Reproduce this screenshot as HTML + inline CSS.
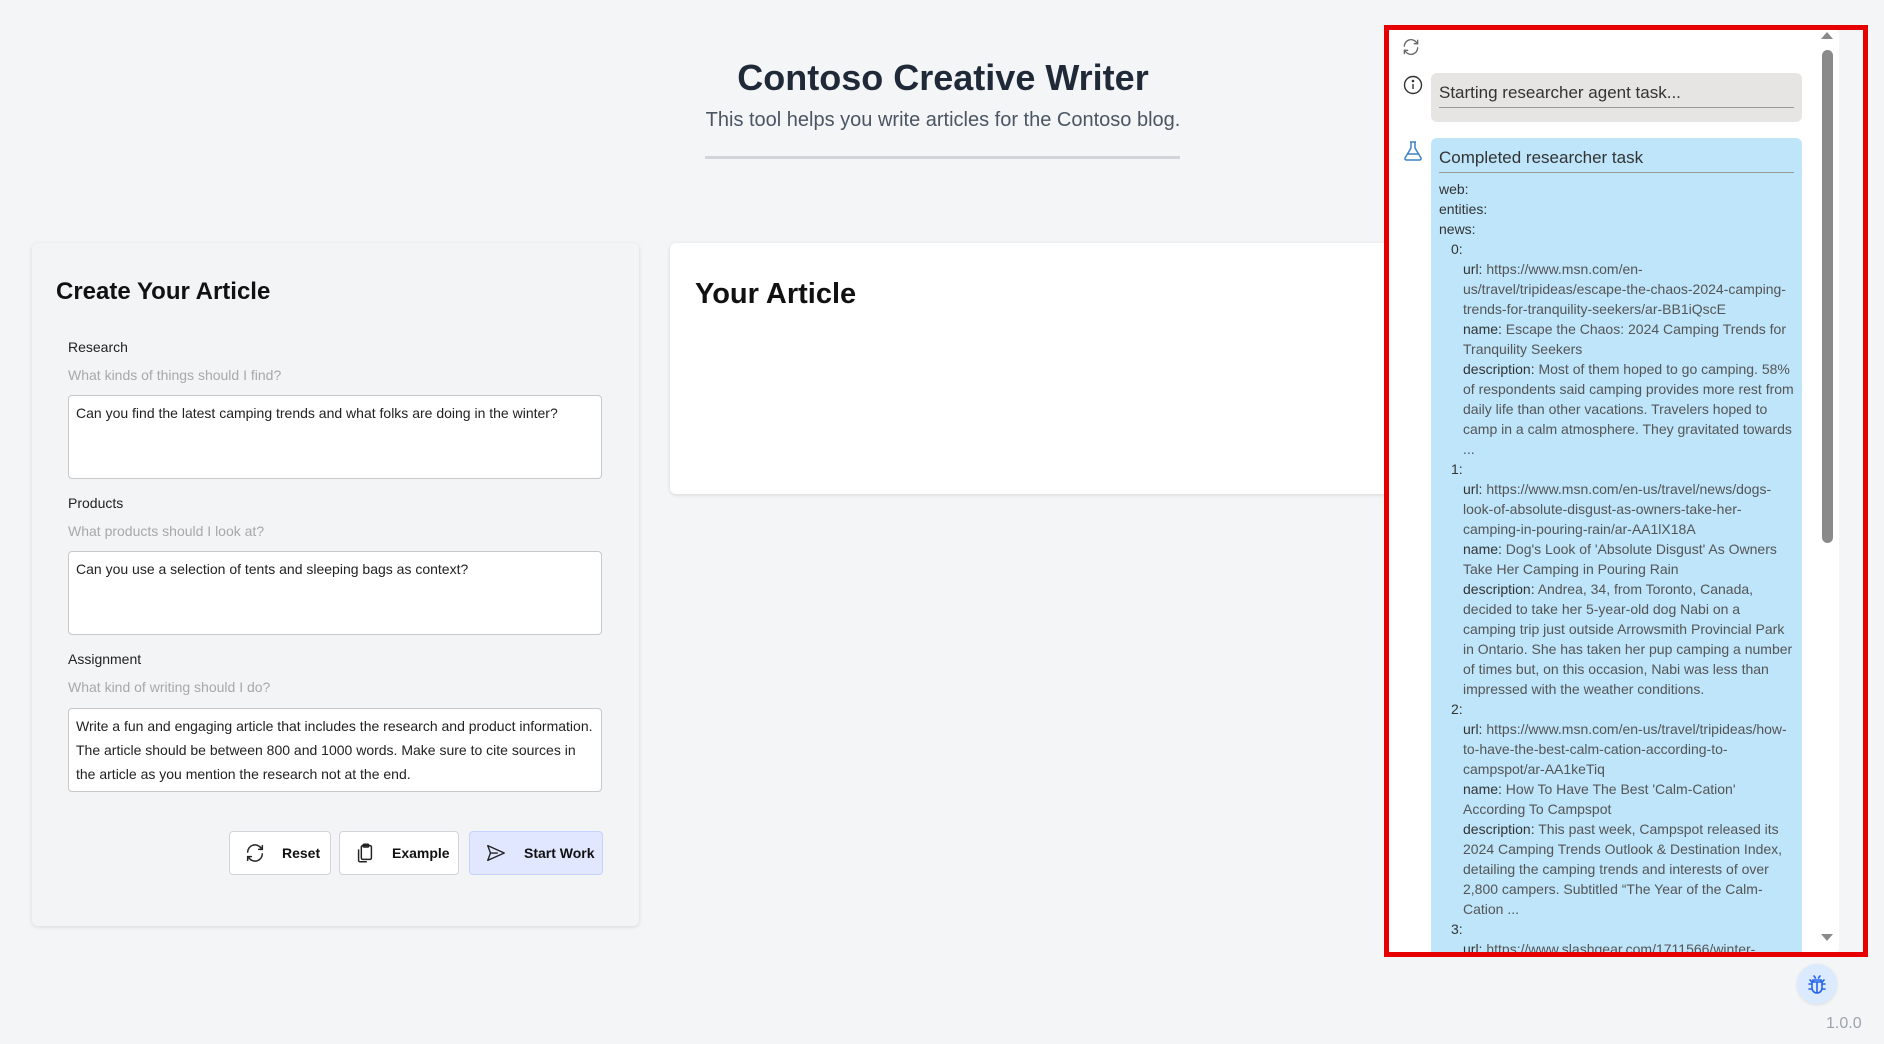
<!DOCTYPE html>
<html><head><meta charset="utf-8"><style>
*{box-sizing:border-box;margin:0;padding:0}
body{width:1884px;height:1044px;background:#f4f5f7;font-family:"Liberation Sans",sans-serif;position:relative;overflow:hidden;color:#1f2937}
.abs{position:absolute}
h1{position:absolute;left:0;width:1886px;text-align:center;top:57px;font-size:36px;font-weight:bold;color:#1f2937}
.sub{position:absolute;left:0;width:1886px;text-align:center;top:109px;font-size:20px;color:#4b5563}
.hr{position:absolute;left:705px;top:156px;width:475px;height:3px;background:#d1d5db}
.card{position:absolute;background:#fff;border-radius:6px;box-shadow:0 1px 4px rgba(0,0,0,.12)}
.lbl{position:absolute;left:68px;font-size:14px;color:#222}
.hint{position:absolute;left:68px;font-size:14px;color:#a8a8a8}
.ta{position:absolute;left:68px;width:534px;background:#fff;border:1px solid #c8c8c8;border-radius:4px;padding:5px 7px;font-size:14px;line-height:24px;color:#222}
.btn{position:absolute;top:831px;height:44px;border:1px solid #d4d4d8;border-radius:4px;background:#fff;font-size:14px;font-weight:bold;color:#111;display:flex;align-items:center}
.btn svg{margin-left:14px;margin-right:16px}
.bub{position:absolute;left:42px;width:371px;border-radius:6px}
.bl{font-size:14px;line-height:20px;color:#555;white-space:nowrap}
.k{color:#333}
</style></head><body>
<h1>Contoso Creative Writer</h1>
<div class="sub">This tool helps you write articles for the Contoso blog.</div>
<div class="hr"></div>

<div class="card" style="left:32px;top:243px;width:607px;height:683px;background:#f3f4f6"></div>
<div class="abs" style="left:56px;top:278px;font-size:24px;font-weight:bold;color:#111">Create Your Article</div>
<div class="lbl" style="top:339px">Research</div>
<div class="hint" style="top:367px">What kinds of things should I find?</div>
<div class="ta" style="top:395px;height:84px">Can you find the latest camping trends and what folks are doing in the winter?</div>
<div class="lbl" style="top:495px">Products</div>
<div class="hint" style="top:523px">What products should I look at?</div>
<div class="ta" style="top:551px;height:84px">Can you use a selection of tents and sleeping bags as context?</div>
<div class="lbl" style="top:651px">Assignment</div>
<div class="hint" style="top:679px">What kind of writing should I do?</div>
<div class="ta" style="top:708px;height:84px">Write a fun and engaging article that includes the research and product information. The article should be between 800 and 1000 words. Make sure to cite sources in the article as you mention the research not at the end.</div>

<div class="btn" style="left:229px;width:102px"><svg width="22" height="22" viewBox="0 0 24 24" fill="none" stroke="#222" stroke-width="1.6" stroke-linecap="round"><path d="M4 11a8 8 0 0 1 14.5-4.5M20 4v4h-4M20 13a8 8 0 0 1-14.5 4.5M4 20v-4h4"/></svg>Reset</div>
<div class="btn" style="left:339px;width:120px"><svg width="22" height="22" viewBox="0 0 24 24" fill="none" stroke="#222" stroke-width="1.6"><rect x="8" y="4" width="11" height="15" rx="1.5"/><path d="M5 8v12a1.5 1.5 0 0 0 1.5 1.5H14" /><rect x="10" y="2.5" width="6" height="3" rx="1"/></svg>Example</div>
<div class="btn" style="left:469px;width:134px;background:#e0e7ff;border-color:#c7d2fe"><svg width="24" height="22" viewBox="0 0 24 24" fill="none" stroke="#222" stroke-width="1.5" stroke-linejoin="round"><path d="M3 4l18 8-18 8 3-8zM6 12h8"/></svg>Start Work</div>

<div class="card" style="left:670px;top:243px;width:730px;height:251px"></div>
<div class="abs" style="left:695px;top:278px;font-size:29px;font-weight:bold;color:#111">Your Article</div>

<div class="abs" style="left:1389px;top:30px;width:450px;height:922px;background:#fff;overflow:hidden;border-radius:4px">
 <svg class="abs" style="left:12px;top:7px" width="20" height="20" viewBox="0 0 24 24" fill="none" stroke="#666" stroke-width="1.6" stroke-linecap="round"><path d="M4 11a8 8 0 0 1 14.5-4.5M20 4v4h-4M20 13a8 8 0 0 1-14.5 4.5M4 20v-4h4"/></svg>
 <svg class="abs" style="left:14px;top:45px" width="20" height="20" viewBox="0 0 20 20" fill="none" stroke="#333" stroke-width="1.4"><circle cx="10" cy="10" r="8.5"/><path d="M10 9v5"/><circle cx="10" cy="6" r=".6" fill="#333"/></svg>
 <svg class="abs" style="left:13px;top:110px" width="22" height="22" viewBox="0 0 22 22" fill="none" stroke="#3b82c4" stroke-width="1.5" stroke-linejoin="round"><path d="M8 2h6M9 2v6L3 18a1.5 1.5 0 0 0 1.3 2h13.4A1.5 1.5 0 0 0 19 18L13 8V2M5 14h12"/></svg>
 <div class="bub" style="top:43px;height:49px;background:#e6e5e4;padding:0 8px">
  <div style="font-size:17px;line-height:18px;padding-top:11px;padding-bottom:5px;color:#333;border-bottom:1px solid #9a9a9a">Starting researcher agent task...</div>
 </div>
 <div class="bub" style="top:108px;height:900px;background:#bee5fa;padding:0 8px">
  <div style="font-size:17px;line-height:18px;padding-top:11px;padding-bottom:5px;color:#333;border-bottom:1px solid #9a9a9a">Completed researcher task</div>
  <div class="bl" style="padding-top:6px">
  <div class="k">web:</div><div class="k">entities:</div><div class="k">news:</div>
  <div style="padding-left:12px"><div class="k">0:</div>
   <div style="padding-left:12px">
   <div><span class="k">url:</span> https://www.msn.com/en-</div><div>us/travel/tripideas/escape-the-chaos-2024-camping-</div><div>trends-for-tranquility-seekers/ar-BB1iQscE</div>
   <div><span class="k">name:</span> Escape the Chaos: 2024 Camping Trends for</div><div>Tranquility Seekers</div>
   <div><span class="k">description:</span> Most of them hoped to go camping. 58%</div><div>of respondents said camping provides more rest from</div><div>daily life than other vacations. Travelers hoped to</div><div>camp in a calm atmosphere. They gravitated towards</div><div>...</div></div>
   <div class="k">1:</div>
   <div style="padding-left:12px">
   <div><span class="k">url:</span> https://www.msn.com/en-us/travel/news/dogs-</div><div>look-of-absolute-disgust-as-owners-take-her-</div><div>camping-in-pouring-rain/ar-AA1lX18A</div>
   <div><span class="k">name:</span> Dog's Look of 'Absolute Disgust' As Owners</div><div>Take Her Camping in Pouring Rain</div>
   <div><span class="k">description:</span> Andrea, 34, from Toronto, Canada,</div><div>decided to take her 5-year-old dog Nabi on a</div><div>camping trip just outside Arrowsmith Provincial Park</div><div>in Ontario. She has taken her pup camping a number</div><div>of times but, on this occasion, Nabi was less than</div><div>impressed with the weather conditions.</div></div>
   <div class="k">2:</div>
   <div style="padding-left:12px">
   <div><span class="k">url:</span> https://www.msn.com/en-us/travel/tripideas/how-</div><div>to-have-the-best-calm-cation-according-to-</div><div>campspot/ar-AA1keTiq</div>
   <div><span class="k">name:</span> How To Have The Best 'Calm-Cation'</div><div>According To Campspot</div>
   <div><span class="k">description:</span> This past week, Campspot released its</div><div>2024 Camping Trends Outlook &amp; Destination Index,</div><div>detailing the camping trends and interests of over</div><div>2,800 campers. Subtitled “The Year of the Calm-</div><div>Cation ...</div></div>
   <div class="k">3:</div>
   <div style="padding-left:12px"><div><span class="k">url:</span> https://www.slashgear.com/1711566/winter-</div></div>
  </div></div>
 </div>
 <div class="abs" style="left:433px;top:20px;width:11px;height:493px;background:#8a8a8a;border-radius:6px"></div>
 <div class="abs" style="left:432px;top:2px;width:0;height:0;border-left:6px solid transparent;border-right:6px solid transparent;border-bottom:7px solid #8a8a8a"></div>
 <div class="abs" style="left:432px;top:904px;width:0;height:0;border-left:6px solid transparent;border-right:6px solid transparent;border-top:7px solid #8a8a8a"></div>
</div>
<div class="abs" style="left:1384px;top:25px;width:484px;height:932px;border:5px solid #e60000"></div>

<div class="abs" style="left:1797px;top:964px;width:40px;height:40px;border-radius:50%;background:#dbeafe;box-shadow:0 1px 3px rgba(0,0,0,.1)"></div>
<svg class="abs" style="left:1805px;top:972px" width="24" height="24" viewBox="0 0 24 24" fill="none" stroke="#2563eb" stroke-width="1.6" stroke-linecap="round"><path d="M9 4l1.5 2M15 4l-1.5 2M8 8h8v2H8zM7 10h10v6a5 5 0 0 1-10 0zM12 10v11M4 12h3M17 12h3M4 17h3M17 17h3M5 8l2 2M19 8l-2 2"/></svg>
<div class="abs" style="left:1826px;top:1015px;font-size:16px;color:#9ca3af">1.0.0</div>
</body></html>
